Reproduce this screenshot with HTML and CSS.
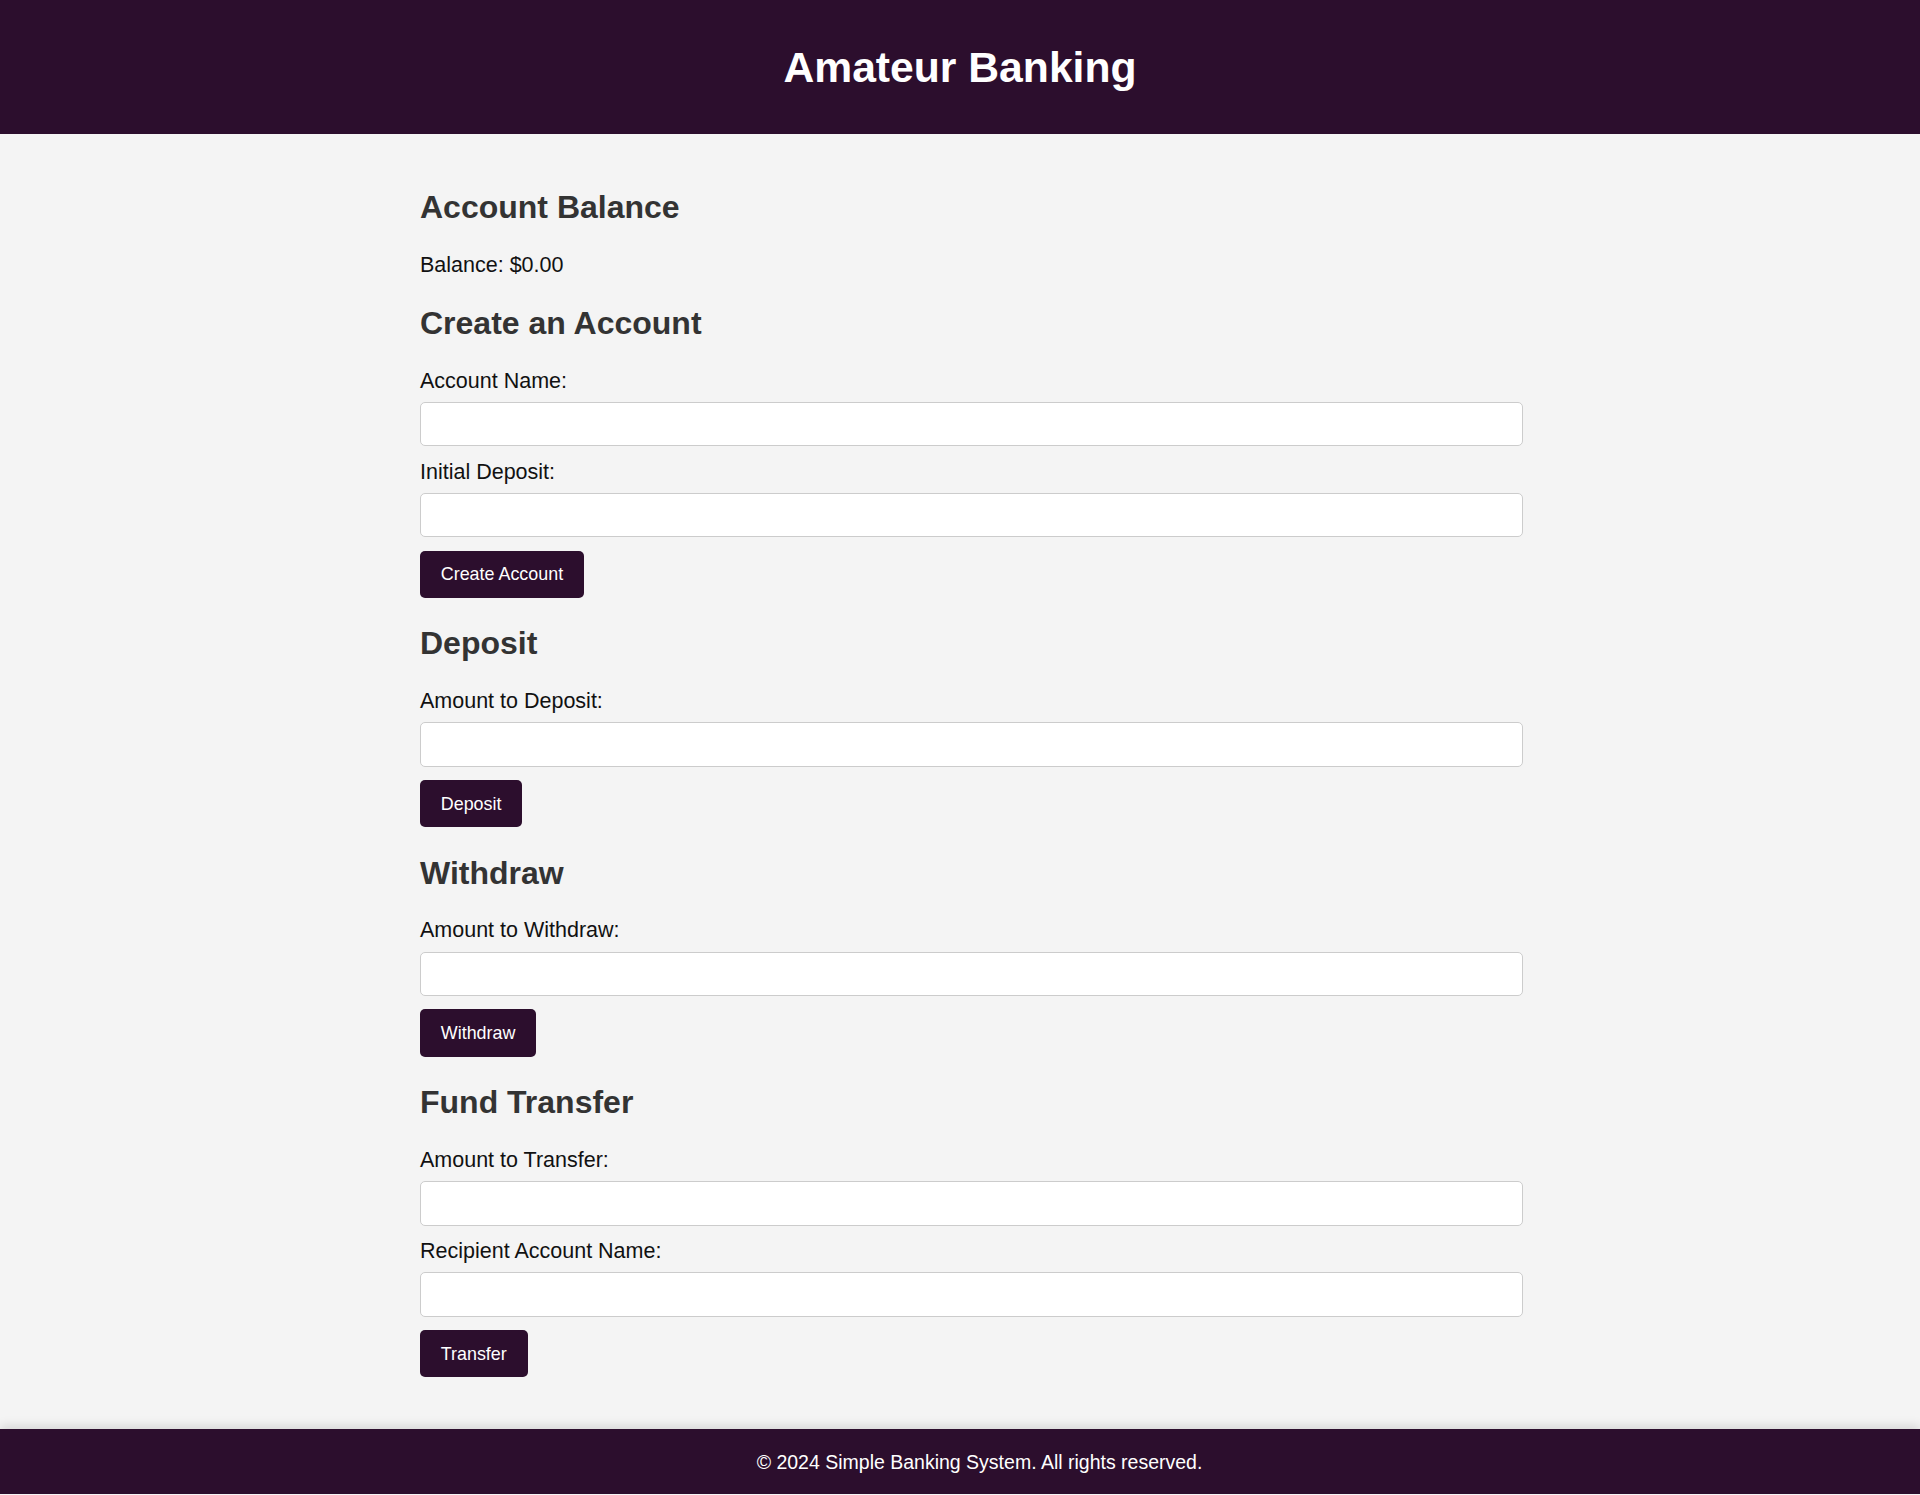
FILE: index.html
```html
<!DOCTYPE html>
<html lang="en">
<head>
<meta charset="utf-8">
<title>Amateur Banking</title>
<link rel="stylesheet" href="styles.css">
</head>
<body>
<header class="site-header">
  <h1 class="site-title">Amateur Banking</h1>
</header>
<main class="main">
  <section class="section">
    <h2 class="section-title">Account Balance</h2>
    <p class="balance">Balance: $0.00</p>
  </section>
  <section class="section">
    <h2 class="section-title">Create an Account</h2>
    <label class="field-label" for="accName">Account Name:</label>
    <input class="field-input" type="text" id="accName">
    <label class="field-label" for="initDep">Initial Deposit:</label>
    <input class="field-input" type="number" id="initDep">
    <button class="btn" type="button">Create Account</button>
  </section>
  <section class="section">
    <h2 class="section-title">Deposit</h2>
    <label class="field-label" for="depAmt">Amount to Deposit:</label>
    <input class="field-input" type="number" id="depAmt">
    <button class="btn" type="button">Deposit</button>
  </section>
  <section class="section">
    <h2 class="section-title">Withdraw</h2>
    <label class="field-label" for="wdAmt">Amount to Withdraw:</label>
    <input class="field-input" type="number" id="wdAmt">
    <button class="btn" type="button">Withdraw</button>
  </section>
  <section class="section">
    <h2 class="section-title">Fund Transfer</h2>
    <label class="field-label" for="trAmt">Amount to Transfer:</label>
    <input class="field-input" type="number" id="trAmt">
    <label class="field-label" for="trTo">Recipient Account Name:</label>
    <input class="field-input" type="text" id="trTo">
    <button class="btn" type="button">Transfer</button>
  </section>
</main>
<footer class="site-footer">
  <p class="footer-text">© 2024 Simple Banking System. All rights reserved.</p>
</footer>
</body>
</html>
```

FILE: styles.css
```css
html, body {
  margin: 0;
  padding: 0;
}

body {
  background: #f4f4f4;
  font-family: "Liberation Sans", Arial, sans-serif;
  color: #111;
}

.site-header {
  background: #2c0e2d;
  height: 134px;
  display: flex;
  align-items: center;
  justify-content: center;
}

.site-title {
  margin: 0;
  color: #fff;
  font-size: 42.67px;
  font-weight: bold;
  line-height: 49px;
}

.main {
  width: 1080px;
  margin: 0 auto;
  padding: 27.5px 0 52px;
}

.section {
  display: block;
}

.section-title {
  margin: 27.5px 0 26.5px;
  font-size: 32px;
  line-height: 37px;
  font-weight: bold;
  color: #333;
}

.balance {
  margin: 0;
  font-size: 21.5px;
  line-height: 25px;
}

.field-label {
  display: block;
  font-size: 21.5px;
  line-height: 25px;
  margin-bottom: 8.3px;
}

.field-input {
  display: block;
  box-sizing: border-box;
  width: 1103px;
  height: 44.5px;
  margin: 0 0 13.3px;
  padding: 0 10px;
  border: 1px solid #cccccc;
  border-radius: 5px;
  background: #fff;
  font-family: "Liberation Sans", Arial, sans-serif;
  font-size: 17.78px;
}

.btn {
  display: block;
  box-sizing: border-box;
  height: 47.3px;
  padding: 0 20.8px;
  border: none;
  border-radius: 5px;
  background: #2c0e2d;
  color: #fff;
  font-family: "Liberation Sans", Arial, sans-serif;
  font-size: 17.9px;
  line-height: 20px;
  cursor: pointer;
}

.site-footer {
  background: #2c0e2d;
  box-shadow: 0 -3px 10px rgba(0, 0, 0, 0.13);
  height: 64.5px;
  padding-left: 39px;
  display: flex;
  align-items: center;
  justify-content: center;
}

.footer-text {
  margin: 0;
  color: #fff;
  font-size: 19.5px;
  line-height: 22px;
}
```
